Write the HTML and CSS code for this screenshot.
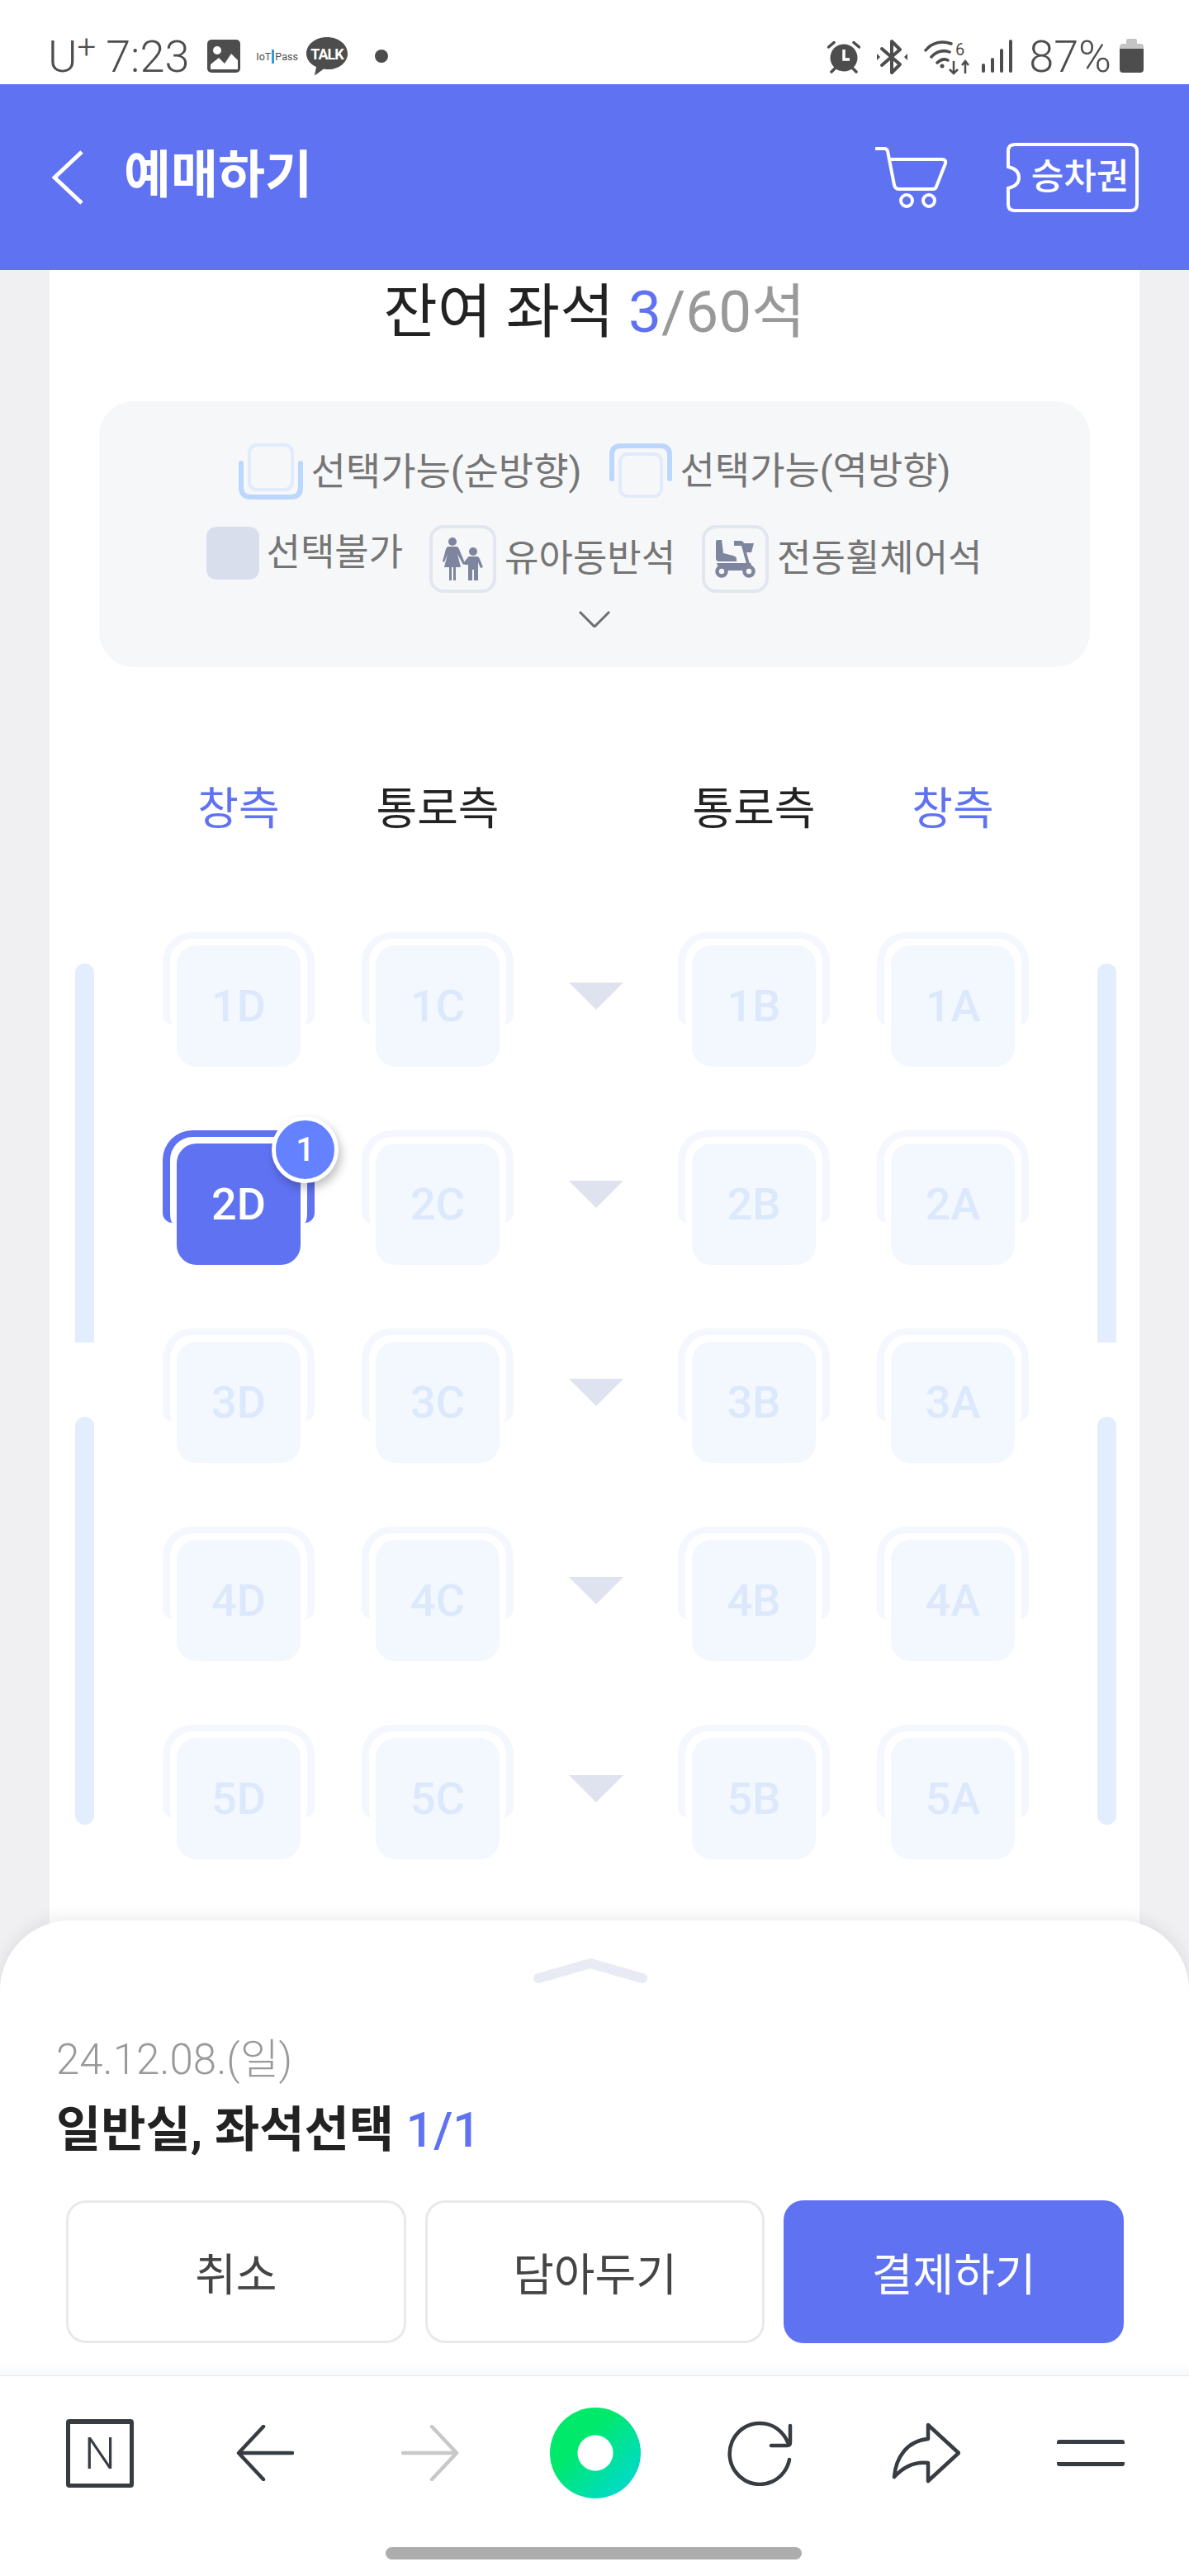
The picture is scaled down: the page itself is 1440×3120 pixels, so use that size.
FILE: index.html
```html
<!DOCTYPE html>
<html lang="ko">
<head>
    <meta charset="UTF-8">
    <title>예매하기</title>
    <link rel="stylesheet" href="styles.css">
</head>
<body>
    <div class="app">
        <div class="status-bar">
            <div class="status-left">
                <span class="carrier">U<sup>+</sup></span>
                <span class="clock">7:23</span>
                <svg class="ic-gallery" width="40" height="40" viewBox="0 0 40 40"><rect width="40" height="40" rx="5" fill="#4d4d4d"/><circle cx="12" cy="13" r="5" fill="#fff"/><path d="M4 36V30L14 22L21 29L29 17L37 25V36Z" fill="#fff"/></svg>
                <span class="iot">IoT<i class="iot-mark"></i>Pass</span>
                <svg class="ic-talk" width="50" height="47" viewBox="0 0 50 47"><path d="M25 0C38.500 0 50 8.500 50 20C50 31 39 39 27 39C25 39 23 39 21 38.500L10 46.500L12 36C5 33 0 27 0 20C0 8.500 11.500 0 25 0Z" fill="#4d4d4d"/><text x="25" y="27" text-anchor="middle" class="talk-text">TALK</text></svg>
                <i class="status-dot"></i>
            </div>
            <div class="status-right">
                <svg class="ic-alarm" width="40" height="40" viewBox="0 0 40 40"><circle cx="20" cy="21" r="16.500" fill="#4d4d4d"/><path d="M20 11V23H27" fill="none" stroke="#fff" stroke-width="3.500"/><path d="M1.500 8L8 2.500M38.500 8L32 2.500M5 38L9 34M35 38L31 34" stroke="#4d4d4d" stroke-width="3.500" stroke-linecap="round"/></svg>
                <svg class="ic-bt" width="37" height="44" viewBox="0 0 37 44"><path d="M6 12L28 31L18 41V3L28 13L6 32" fill="none" stroke="#4d4d4d" stroke-width="4" stroke-linejoin="round" stroke-linecap="round"/><path d="M0 18V26L4 22ZM37 18V26L33 22Z" fill="#4d4d4d"/></svg>
                <svg class="ic-wifi" width="58" height="44" viewBox="0 0 58 44"><path d="M2 14C10 4 22 2 33 6M9 22C15 15 24 13 31 16M16 29C20 25 25 24 29 26" fill="none" stroke="#4d4d4d" stroke-width="3.500" stroke-linecap="round"/><circle cx="22" cy="33" r="2.500" fill="#4d4d4d"/><text x="38" y="20" class="wifi-six">6</text><path d="M36 27V42M31 37L36 42L41 37M50 42V28M46 32L50 27L54 32" fill="none" stroke="#4d4d4d" stroke-width="2.500"/></svg>
                <svg class="ic-signal" width="37" height="40" viewBox="0 0 37 40"><path d="M2 31V38M13 24V38M24 13V38M35 2V38" stroke="#4d4d4d" stroke-width="4" stroke-linecap="round"/></svg>
                <span class="battery-text">87%</span>
                <div class="battery"></div>
            </div>
        </div>

        <header class="top-bar">
            <svg class="back-icon" width="38" height="66" viewBox="0 0 38 66"><path d="M36 2L3 33L36 64" fill="none" stroke="#fff" stroke-width="5"/></svg>
            <h1>예매하기</h1>
            <svg class="cart-icon" width="88" height="76" viewBox="0 0 88 76"><path d="M1 3H11Q14 3 15 6L23 47Q24 52 29 52H70Q73 52 74 49L85 21Q86 16 81 16H18" fill="none" stroke="#fff" stroke-width="4" stroke-linecap="round" stroke-linejoin="round"/><circle cx="38" cy="66" r="7" fill="none" stroke="#fff" stroke-width="4"/><circle cx="65" cy="66" r="7" fill="none" stroke="#fff" stroke-width="4"/></svg>
            <div class="ticket-btn">
                <svg class="ticket-shape" width="160" height="84" viewBox="0 0 160 84"><path d="M10 2H150Q158 2 158 10V74Q158 82 150 82H10Q2 82 2 74V55C11 53 15 48 15 42C15 36 11 31 2 29V10Q2 2 10 2Z" fill="none" stroke="#fff" stroke-width="4"/></svg>
                <span>승차권</span>
            </div>
        </header>

        <main class="page">
            <div class="panel">
                <div class="seat-count">잔여 좌석 <span class="blue">3</span><span class="grey">/60석</span></div>

                <div class="legend">
                    <div class="legend-row">
                        <div class="legend-item">
                            <svg width="78" height="68" viewBox="0 0 78 68"><rect x="13" y="2" width="52" height="54" rx="9" fill="none" stroke="#e0ebfb" stroke-width="4"/><path d="M3 24V53Q3 65 15 65H63Q75 65 75 53V24" fill="none" stroke="#bcd7fd" stroke-width="6" stroke-linecap="round"/></svg>
                            <span>선택가능(순방향)</span>
                        </div>
                        <div class="legend-item wide">
                            <svg width="76" height="66" viewBox="0 0 76 66"><path d="M3 43V14Q3 3 14 3H62Q73 3 73 14V43" fill="none" stroke="#bcd7fd" stroke-width="6" stroke-linecap="round"/><rect x="13" y="13" width="50" height="51" rx="9" fill="none" stroke="#e0ebfb" stroke-width="4"/></svg>
                            <span>선택가능(역방향)</span>
                        </div>
                    </div>
                    <div class="legend-row second">
                        <div class="legend-item tight">
                            <i class="seat-off"></i>
                            <span>선택불가</span>
                        </div>
                        <div class="legend-item">
                            <div class="legend-box">
                                <svg width="52" height="52" viewBox="0 0 52 52"><g fill="#7e859e"><circle cx="13" cy="5" r="5"/><circle cx="38" cy="17" r="5"/><path d="M8 11H18Q20 11 21 14L28 31L26 33L19 20L23 36H17V52H14V36H12V52H9V36H3L7 20L3 30L1 29L5 14Q6 11 8 11Z"/><path d="M33 23H43Q45 23 46 26L50 36L47 37L44 30V52H39V39H37V52H32V33L28 33L26 31L31 25Q32 23 33 23Z"/></g></svg>
                            </div>
                            <span>유아동반석</span>
                        </div>
                        <div class="legend-item">
                            <div class="legend-box">
                                <svg width="50" height="46" viewBox="0 0 50 46"><g fill="#7e859e"><path d="M1 2Q1 0 3 0H8L10 16L22 19Q26 20 26 23V26H5Q1 26 1 22Z"/><path d="M23 1H31Q34 1 35 4L42 29H38L32 7H23Z"/><path d="M33 4H47L44 15H36Z"/><path d="M2 28H43L47 37H15L12 33H4Z"/></g><circle cx="8" cy="38" r="5.500" fill="#f6f7f9" stroke="#7e859e" stroke-width="4.500"/><circle cx="41" cy="38" r="5.500" fill="#f6f7f9" stroke="#7e859e" stroke-width="4.500"/></svg>
                            </div>
                            <span>전동휠체어석</span>
                        </div>
                    </div>
                    <svg class="legend-more" width="38" height="20" viewBox="0 0 38 20"><path d="M1 1L19 19L37 1" fill="none" stroke="#6f6f6f" stroke-width="3"/></svg>
                </div>

                <div class="seat-head">
                    <span class="blue">창측</span>
                    <span>통로측</span>
                    <span></span>
                    <span>통로측</span>
                    <span class="blue">창측</span>
                </div>

                <div class="seat-map">
                    <div class="window-col">
                        <i class="window w1"></i>
                        <i class="window w2"></i>
                    </div>
                    <div class="seat-grid">
                        <div class="seat"><b>1D</b></div>
                        <div class="seat"><b>1C</b></div>
                        <i class="aisle"></i>
                        <div class="seat"><b>1B</b></div>
                        <div class="seat"><b>1A</b></div>

                        <div class="seat on"><b>2D</b><em class="seat-badge">1</em></div>
                        <div class="seat"><b>2C</b></div>
                        <i class="aisle"></i>
                        <div class="seat"><b>2B</b></div>
                        <div class="seat"><b>2A</b></div>

                        <div class="seat"><b>3D</b></div>
                        <div class="seat"><b>3C</b></div>
                        <i class="aisle"></i>
                        <div class="seat"><b>3B</b></div>
                        <div class="seat"><b>3A</b></div>

                        <div class="seat"><b>4D</b></div>
                        <div class="seat"><b>4C</b></div>
                        <i class="aisle"></i>
                        <div class="seat"><b>4B</b></div>
                        <div class="seat"><b>4A</b></div>

                        <div class="seat"><b>5D</b></div>
                        <div class="seat"><b>5C</b></div>
                        <i class="aisle"></i>
                        <div class="seat"><b>5B</b></div>
                        <div class="seat"><b>5A</b></div>
                    </div>
                    <div class="window-col">
                        <i class="window w1"></i>
                        <i class="window w2"></i>
                    </div>
                </div>
            </div>
        </main>

        <section class="sheet">
            <svg class="sheet-handle" width="140" height="32" viewBox="0 0 140 32"><path d="M7 25L70 7L133 25" fill="none" stroke="#e8ebf3" stroke-width="12" stroke-linecap="round" stroke-linejoin="round"/></svg>
            <div class="sheet-date">24.12.08.(일)</div>
            <div class="sheet-title">일반실, 좌석선택 <span class="blue">1/1</span></div>
            <div class="sheet-actions">
                <button>취소</button>
                <button>담아두기</button>
                <button class="primary">결제하기</button>
            </div>
        </section>

        <nav class="browser-nav">
            <div class="nav-row">
                <div class="n-box">N</div>
                <svg width="70" height="68" viewBox="0 0 70 68"><path d="M68 34H4M33 2L3 34L33 66" fill="none" stroke="#373c42" stroke-width="4.500" stroke-linecap="round" stroke-linejoin="round"/></svg>
                <svg width="70" height="68" viewBox="0 0 70 68"><path d="M2 34H66M37 2L67 34L37 66" fill="none" stroke="#c8c8c8" stroke-width="4.500" stroke-linecap="round" stroke-linejoin="round"/></svg>
                <div class="n-dot"></div>
                <svg width="80" height="80" viewBox="0 0 80 80"><path d="M75 48A36.500 37 0 1 1 73 27M76 7V27Q76 31 72 31H53" fill="none" stroke="#373c42" stroke-width="4.500" stroke-linecap="round" stroke-linejoin="round"/></svg>
                <svg width="84" height="74" viewBox="0 0 84 74"><path d="M45 3L82 37L45 71V49C28 47 14 55 4 66C6 42 20 22 45 20Z" fill="none" stroke="#373c42" stroke-width="4.500" stroke-linejoin="round"/></svg>
                <div class="n-menu"></div>
            </div>
            <div class="home-bar"></div>
        </nav>
    </div>
</body>
</html>
```
FILE: styles.css
```css
* {
    box-sizing: border-box;
}

body {
    margin: 0;
    font-family: Roboto, "Noto Sans CJK KR", sans-serif;
    background: #fff;
}

.app {
    display: flex;
    flex-direction: column;
    width: 1440px;
    height: 3120px;
    overflow: hidden;
}

.blue {
    color: #5f72f2;
}

.grey {
    color: #999;
}

/* status bar */
.status-bar {
    display: flex;
    justify-content: space-between;
    flex: none;
    height: 102px;
    padding: 45px 55px 0 58px;
    color: #4d4d4d;
}

.status-left,
.status-right {
    display: flex;
    align-items: flex-start;
    height: 47px;
}

.carrier,
.clock,
.battery-text {
    font-size: 54px;
    font-weight: 300;
    line-height: 47px;
}

.carrier sup {
    font-size: 40px;
    line-height: 0;
    vertical-align: 16px;
}

.clock {
    margin-left: 12px;
}

.ic-gallery {
    margin: 3px 0 0 22px;
}

.iot {
    display: flex;
    align-items: center;
    width: 46px;
    height: 16px;
    margin: 15px 0 0 19px;
    font-size: 12.500px;
    white-space: nowrap;
}

.iot-mark {
    flex: none;
    width: 3px;
    height: 17px;
    margin: 0 1px;
    background: #2f9fd8;
}

.ic-talk {
    margin-left: 15px;
}

.talk-text {
    fill: #fff;
    font-size: 18px;
    font-weight: 700;
    letter-spacing: -1px;
}

.wifi-six {
    fill: #4d4d4d;
    font-size: 20px;
}

.status-dot {
    width: 16px;
    height: 16px;
    margin: 15px 0 0 33px;
    border-radius: 50%;
    background: #4d4d4d;
}

.ic-alarm {
    margin-top: 4px;
}

.ic-bt {
    margin: 2px 0 0 20px;
}

.ic-wifi {
    margin: 2px 0 0 20px;
}

.ic-signal {
    margin: 3px 0 0 12px;
}

.battery-text {
    margin-left: 20px;
}

.battery {
    position: relative;
    width: 29px;
    height: 35px;
    margin: 8px 0 0 10px;
    border-radius: 4px;
    background: linear-gradient(#c4c4c4 17%, #4d4d4d 17%);
}

.battery::before {
    content: "";
    position: absolute;
    top: -6px;
    left: 8px;
    width: 13px;
    height: 7px;
    border-radius: 2px 2px 0 0;
    background: #c4c4c4;
}

/* header */
.top-bar {
    display: flex;
    align-items: center;
    flex: none;
    height: 225px;
    padding: 0 61px 0 63px;
    background: #5f72f2;
    color: #fff;
}

.top-bar h1 {
    flex: 1;
    margin: 0 0 4px 49px;
    font-size: 62px;
    font-weight: 700;
    line-height: 1;
}

.cart-icon {
    margin-right: 71px;
}

.ticket-btn {
    position: relative;
    width: 160px;
    height: 84px;
    padding-left: 18px;
    font-size: 43px;
    font-weight: 500;
    line-height: 82px;
    text-align: center;
}

.ticket-shape {
    position: absolute;
    top: 0;
    left: 0;
}

/* main panel */
.page {
    flex: 1;
    min-height: 0;
    padding: 0 60px;
    background: #f0f0f3;
    overflow: hidden;
}

.panel {
    height: 100%;
    background: #fff;
}

.seat-count {
    height: 100px;
    font-size: 71px;
    line-height: 102px;
    text-align: center;
    color: #222;
}

.legend {
    display: flex;
    flex-direction: column;
    align-items: center;
    height: 322px;
    margin: 59px 60px 0;
    padding-top: 51px;
    border-radius: 42px;
    background: #f6f7f9;
}

.legend-row {
    display: flex;
    align-items: flex-start;
    gap: 27px;
}

.legend-row.second {
    gap: 32px;
    margin-top: 31px;
}

.legend-item {
    display: flex;
    align-items: center;
    gap: 10px;
    font-size: 46px;
    line-height: 60px;
    color: #757575;
}

.legend-row.second .legend-item {
    font-size: 45px;
}

.legend-item.wide {
    margin-left: 6px;
}

.legend-item.tight {
    margin-top: 2px;
    gap: 8px;
}

.seat-off {
    width: 64px;
    height: 64px;
    border-radius: 12px;
    background: #d9deed;
}

.legend-box {
    display: flex;
    align-items: center;
    justify-content: center;
    width: 81px;
    height: 82px;
    border: 4px solid #e2e7ef;
    border-radius: 17px;
}

.legend-more {
    margin-top: 22px;
}

.seat-head {
    display: grid;
    grid-template-columns: 184px 184px 85px 184px 184px;
    column-gap: 57px;
    margin: 143px 0 118px 137px;
    font-size: 54px;
    line-height: 60px;
    text-align: center;
    color: #222;
}

/* seats */
.seat-map {
    display: flex;
    justify-content: space-between;
    padding: 0 28px 0 31px;
}

.window-col {
    display: flex;
    flex-direction: column;
    gap: 90px;
    width: 23px;
    padding-top: 38px;
}

.window {
    display: block;
    background: #e2edfd;
}

.window.w1 {
    height: 459px;
    border-radius: 12px 12px 0 0;
}

.window.w2 {
    height: 494px;
    border-radius: 12px;
}

.seat-grid {
    display: grid;
    isolation: isolate;
    grid-template-columns: 184px 184px 85px 184px 184px;
    grid-auto-rows: 163px;
    gap: 77px 57px;
}

.seat {
    position: relative;
    display: flex;
    align-items: center;
    justify-content: center;
    width: 150px;
    height: 147px;
    margin: 16px 0 0 17px;
    border-radius: 24px;
    background: #f3f7fe;
    color: #dce8fb;
}

.seat::before {
    content: "";
    box-sizing: border-box;
    position: absolute;
    top: -16px;
    left: -17px;
    z-index: -1;
    width: 184px;
    height: 112px;
    border: solid #f4f7fe;
    border-width: 8px 9px 0;
    border-radius: 36px 36px 12px 12px;
}

.seat b {
    font-size: 54px;
    font-weight: 500;
}

.seat.on {
    background: #5f72f2;
    color: #fff;
}

.seat.on::before {
    border-color: #5f72f2;
}

.seat-badge {
    position: absolute;
    top: -33px;
    left: 115px;
    width: 81px;
    height: 81px;
    border: 5px solid #fff;
    border-radius: 50%;
    background: #6482ff;
    box-shadow: 3px 6px 12px rgba(0, 0, 0, 0.25);
    font-size: 40px;
    font-style: normal;
    font-weight: 500;
    line-height: 71px;
    text-align: center;
}

.aisle {
    justify-self: center;
    width: 0;
    height: 0;
    margin-top: 61px;
    border: solid transparent;
    border-width: 33px 33px 0;
    border-top-color: #dfe3ef;
}

/* bottom sheet */
.sheet {
    position: relative;
    flex: none;
    height: 551px;
    margin-top: -85px;
    padding: 45px 79px 0 68px;
    border-radius: 85px 85px 0 0;
    background: linear-gradient(#fff 97%, #f8f9fb);
    box-shadow: 0 -4px 20px rgba(0, 0, 0, 0.08);
}

.sheet-handle {
    display: block;
    margin: 0 auto;
}

.sheet-date {
    margin-top: 62px;
    font-size: 51px;
    font-weight: 300;
    line-height: 60px;
    color: #999;
}

.sheet-title {
    margin-top: 25px;
    font-size: 59px;
    font-weight: 700;
    line-height: 60px;
    color: #222;
}

.sheet-title .blue {
    font-weight: 500;
}

.sheet-actions {
    display: grid;
    grid-template-columns: repeat(3, 1fr);
    gap: 23px;
    margin: 55px 0 0 12px;
}

.sheet-actions button {
    height: 173px;
    border: 3px solid #e9e9e9;
    border-radius: 24px;
    background: #fff;
    font-family: inherit;
    font-size: 54px;
    color: #444;
}

.sheet-actions .primary {
    border: none;
    background: #5f72f2;
    color: #fff;
}

/* browser toolbar */
.browser-nav {
    position: relative;
    flex: none;
    height: 243px;
    border-top: 1px solid #e8e8e8;
    background: #fff;
}

.nav-row {
    display: grid;
    grid-template-columns: repeat(7, 200px);
    place-items: center;
    height: 186px;
    padding-left: 21px;
}

.n-box {
    width: 82px;
    height: 83px;
    border: solid #373c42;
    border-width: 6px 5px 5px;
    border-radius: 4px;
    font-size: 54px;
    font-weight: 300;
    line-height: 72px;
    text-align: center;
    color: #373c42;
}

.n-dot {
    width: 110px;
    height: 110px;
    border-radius: 50%;
    background: radial-gradient(circle at center, #fff 21px, transparent 22px), linear-gradient(135deg, #00e96a 35%, #00d9d0 90%);
}

.n-menu {
    width: 82px;
    height: 32px;
    border: solid #373c42;
    border-width: 5px 0;
    border-radius: 3px;
}

.home-bar {
    width: 504px;
    height: 15px;
    margin: 21px 0 0 467px;
    border-radius: 8px;
    background: #adadad;
}
```
